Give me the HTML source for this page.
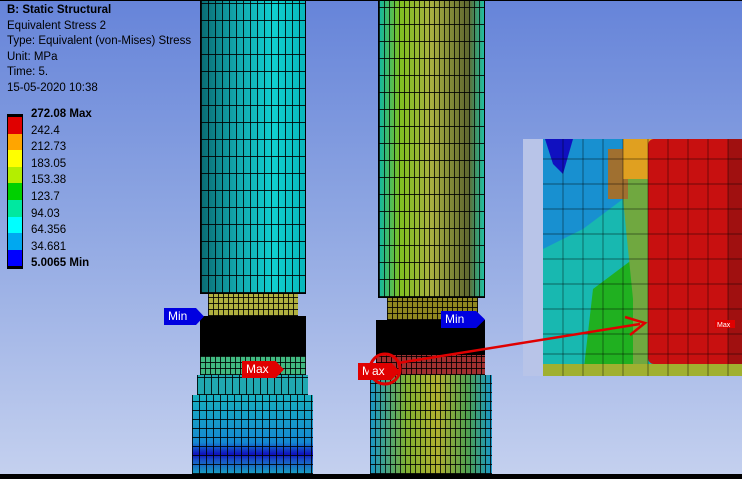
<!DOCTYPE html>
<html><head><style>
*{margin:0;padding:0;box-sizing:border-box}
body{width:742px;height:479px;overflow:hidden;position:relative;background:linear-gradient(#6684d9 0%,#8ea6e2 45%,#c5d1ef 100%);font-family:"Liberation Sans",sans-serif}
.a{position:absolute}
.mesh{background-image:repeating-linear-gradient(90deg,rgba(0,0,0,.85) 0 1px,transparent 1px 7px),repeating-linear-gradient(0deg,rgba(0,0,0,.85) 0 1px,transparent 1px 17px)}
.fine{background-image:repeating-linear-gradient(90deg,rgba(0,0,0,.85) 0 1px,transparent 1px 5px),repeating-linear-gradient(0deg,rgba(0,0,0,.85) 0 1px,transparent 1px 6px)}
.t{font-size:11.5px;color:#000;line-height:15.5px}
.leg div{height:16.6px;width:16px;border-left:1px solid #000;border-right:1px solid #000}
.lab{font-size:11.5px;line-height:16.6px}
.tag{color:#fff;font-size:12px;padding:1px 4px;height:17px;line-height:15px;clip-path:polygon(0 0,80% 0,100% 50%,80% 100%,0 100%)}
</style></head><body>
<div class="a" style="left:0;top:0;width:742px;height:1px;background:#000"></div>
<div class="a t" style="left:7px;top:3px"><b>B: Static Structural</b><br>Equivalent Stress 2<br>Type: Equivalent (von-Mises) Stress<br>Unit: MPa<br>Time: 5.<br>15-05-2020 10:38</div>
<div class="a leg" style="left:7px;top:114px;border-top:3px solid #000;border-bottom:3px solid #000">
<div style="background:#e00000"></div><div style="background:#ffa500"></div><div style="background:#ffff00"></div><div style="background:#b4ee00"></div><div style="background:#00d000"></div><div style="background:#00e8a0"></div><div style="background:#00ffff"></div><div style="background:#00a8f0"></div><div style="background:#0000ff"></div>
</div>
<div class="a lab" style="left:31px;top:106px"><b>272.08 Max</b><br>242.4<br>212.73<br>183.05<br>153.38<br>123.7<br>94.03<br>64.356<br>34.681<br><b>5.0065 Min</b></div>

<div class="a mesh" style="left:200px;top:0;width:106px;height:294px;background-color:#10b8c0;background-image:repeating-linear-gradient(90deg,rgba(0,0,0,.85) 0 1px,transparent 1px 7px),repeating-linear-gradient(0deg,rgba(0,0,0,.85) 0 1px,transparent 1px 17px),linear-gradient(90deg,#0a6d74,#13a8ae 35%,#10cfd0 70%,#08b6ba);border:1px solid #000"></div>
<div class="a fine" style="left:208px;top:294px;width:90px;height:22px;background-color:#b0b040"></div>
<div class="a" style="left:200px;top:316px;width:106px;height:42px;background:#000"></div>
<div class="a fine" style="left:200px;top:356px;width:106px;height:19px;background-color:#40b880"></div>
<div class="a mesh" style="left:197px;top:375px;width:111px;height:20px;background-color:#20a8b0"></div>
<div class="a mesh" style="left:192px;top:395px;width:121px;height:79px;background-color:#1890c8;background-image:repeating-linear-gradient(90deg,rgba(0,0,0,.85) 0 1px,transparent 1px 7px),repeating-linear-gradient(0deg,rgba(0,0,0,.85) 0 1px,transparent 1px 9px),linear-gradient(#18b0c0,#1488d0 60%,#1010c0 75%,#1850c8 82%,#18a0c0)"></div>

<div class="a" style="left:378px;top:0;width:107px;height:298px;border:1px solid #000;background-image:repeating-linear-gradient(90deg,rgba(0,0,0,.8) 0 1px,transparent 1px 5px),repeating-linear-gradient(0deg,rgba(0,0,0,.85) 0 1px,transparent 1px 17px),linear-gradient(90deg,#10b8a0,#80c020 20%,#a8b040 50%,#606830 85%,#20c0a0)"></div>
<div class="a fine" style="left:387px;top:298px;width:91px;height:22px;background-color:#908820"></div>
<div class="a" style="left:376px;top:320px;width:109px;height:37px;background:#000"></div>
<div class="a fine" style="left:376px;top:355px;width:109px;height:20px;background-color:#a03030"></div>
<div class="a" style="left:370px;top:375px;width:122px;height:99px;background-image:repeating-linear-gradient(90deg,rgba(0,0,0,.8) 0 1px,transparent 1px 5px),repeating-linear-gradient(0deg,rgba(0,0,0,.85) 0 1px,transparent 1px 9px),linear-gradient(90deg,#1898c8,#80b030 30%,#b0b030 55%,#50a050 80%,#1898c8)"></div>
<div class="a" style="left:0;top:474px;width:742px;height:5px;background:#000"></div>

<div class="a" style="left:523px;top:139px;width:219px;height:237px;background:#c0c8e8;overflow:hidden">
<svg width="219" height="237" style="position:absolute;left:0;top:0">
<rect x="20" y="0" width="199" height="237" fill="#18b8b0"/>
<path d="M20 0H100V60L60 90 20 110Z" fill="#1890d0"/>
<path d="M22 0H50L40 35 30 25Z" fill="#1010c0"/>
<path d="M60 237L70 150 110 120 125 140V237Z" fill="#20b020"/>
<path d="M100 0H125V237H110V160L100 60Z" fill="#70a840"/>
<rect x="85" y="10" width="20" height="50" fill="#a07030"/>
<rect x="100" y="0" width="45" height="40" fill="#e0a020"/>
<rect x="125" y="0" width="94" height="225" rx="6" fill="#c81010"/>
<rect x="205" y="0" width="14" height="225" fill="#a01010"/>
<rect x="20" y="225" width="199" height="12" fill="#a0b030"/>
<g stroke="#000" stroke-opacity=".6" stroke-width=".7" fill="none">
<path d="M20 20H219M20 45H219M20 70H219M20 95H219M20 120H219M20 145H219M20 170H219M20 195H219M20 215H219"/>
<path d="M40 0V237M60 0V237M80 0V237M100 0V237M125 0V237M145 0V237M165 0V237M185 0V237M205 0V237"/>
</g>
<rect x="0" y="0" width="20" height="237" fill="#b8c4e8"/>
<rect x="192" y="181" width="20" height="8" fill="#e00000"/>
<text x="194" y="188" font-size="7" fill="#fff" font-family="Liberation Sans">Max</text>
</svg>
</div>

<div class="a tag" style="left:164px;top:308px;background:#0000e0;width:40px">Min</div>
<div class="a tag" style="left:242px;top:361px;background:#e00000;width:42px">Max</div>
<div class="a tag" style="left:441px;top:311px;background:#0000e0;width:44px">Min</div>
<div class="a tag" style="left:358px;top:363px;background:#e00000;width:42px">Max</div>
<svg class="a" style="left:0;top:0" width="742" height="479">
<circle cx="385" cy="369" r="15" fill="none" stroke="#e00000" stroke-width="3"/>
<line x1="398" y1="363" x2="640" y2="324" stroke="#e00000" stroke-width="2.5"/>
<path d="M625 317L645 323 630 335" fill="none" stroke="#e00000" stroke-width="2.5"/>
</svg>
</body></html>
